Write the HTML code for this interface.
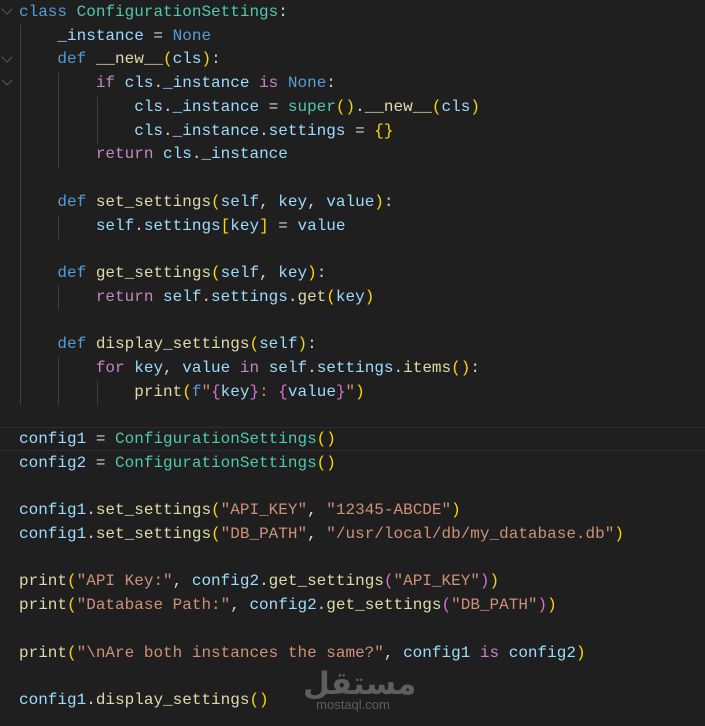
<!DOCTYPE html>
<html><head><meta charset="utf-8">
<style>
html,body{margin:0;padding:0;background:#1f1f1f;width:705px;height:726px;overflow:hidden}
#ed{position:relative;width:705px;height:726px;font-family:"Liberation Mono",monospace;font-size:16px;color:#d4d4d4}
.l{position:absolute;left:19px;height:23.72px;line-height:23.72px;white-space:pre}
.k{color:#569cd6}.c{color:#c586c0}.t{color:#4ec9b0}.f{color:#dcdcaa}.v{color:#9cdcfe}.s{color:#ce9178}
.b1{color:#ffd700}.b2{color:#da70d6}
.g{position:absolute;width:1px;background:#404040}
.cur{position:absolute;left:0;width:705px;top:427px;height:22px;border-top:1px solid #2d2d2d;border-bottom:1px solid #2d2d2d}
.fold{position:absolute;left:3px;width:7px;height:7px;border-right:1px solid #5a5a5a;border-bottom:1px solid #5a5a5a;transform:rotate(45deg)}
.logo{position:absolute;left:303px;top:670px;width:100px;text-align:center;color:#5e5e5e}
#lines{position:absolute;left:0;top:2px;width:705px;height:724px;font-family:"Liberation Mono",monospace;font-size:16px;color:#d4d4d4}
</style></head><body><div id="ed">
<div class="cur"></div>
<div class="fold" style="top:5px"></div>
<div class="fold" style="top:53px"></div>
<div class="fold" style="top:76px"></div>
<div class="g" style="left:20px;top:25px;height:380px"></div>
<div class="g" style="left:58px;top:73px;height:95px"></div>
<div class="g" style="left:97px;top:97px;height:47px"></div>
<div class="g" style="left:58px;top:215px;height:24px"></div>
<div class="g" style="left:58px;top:286px;height:24px"></div>
<div class="g" style="left:58px;top:357px;height:48px"></div>
<div class="g" style="left:97px;top:381px;height:24px"></div>
<div class="logo"><div style="font-family:'DejaVu Sans',sans-serif;font-size:31px;font-weight:bold;line-height:28px">مستقل</div><div style="font-family:'Liberation Sans',sans-serif;font-size:13px;line-height:13px">mostaql.com</div></div>
<div id="lines">
<div class="l" style="top:-1px"><span class="k">class</span> <span class="t">ConfigurationSettings</span>:</div>
<div class="l" style="top:22.7px">    <span class="v">_instance</span> = <span class="k">None</span></div>
<div class="l" style="top:46.4px">    <span class="k">def</span> <span class="f">__new__</span><span class="b1">(</span><span class="v">cls</span><span class="b1">)</span>:</div>
<div class="l" style="top:70.2px">        <span class="c">if</span> <span class="v">cls</span>.<span class="v">_instance</span> <span class="c">is</span> <span class="k">None</span>:</div>
<div class="l" style="top:93.9px">            <span class="v">cls</span>.<span class="v">_instance</span> = <span class="t">super</span><span class="b1">()</span>.<span class="f">__new__</span><span class="b1">(</span><span class="v">cls</span><span class="b1">)</span></div>
<div class="l" style="top:117.6px">            <span class="v">cls</span>.<span class="v">_instance</span>.<span class="v">settings</span> = <span class="b1">{}</span></div>
<div class="l" style="top:141.3px">        <span class="c">return</span> <span class="v">cls</span>.<span class="v">_instance</span></div>
<div class="l" style="top:188.8px">    <span class="k">def</span> <span class="f">set_settings</span><span class="b1">(</span><span class="v">self</span>, <span class="v">key</span>, <span class="v">value</span><span class="b1">)</span>:</div>
<div class="l" style="top:212.5px">        <span class="v">self</span>.<span class="v">settings</span><span class="b1">[</span><span class="v">key</span><span class="b1">]</span> = <span class="v">value</span></div>
<div class="l" style="top:259.9px">    <span class="k">def</span> <span class="f">get_settings</span><span class="b1">(</span><span class="v">self</span>, <span class="v">key</span><span class="b1">)</span>:</div>
<div class="l" style="top:283.7px">        <span class="c">return</span> <span class="v">self</span>.<span class="v">settings</span>.<span class="f">get</span><span class="b1">(</span><span class="v">key</span><span class="b1">)</span></div>
<div class="l" style="top:331.1px">    <span class="k">def</span> <span class="f">display_settings</span><span class="b1">(</span><span class="v">self</span><span class="b1">)</span>:</div>
<div class="l" style="top:354.8px">        <span class="c">for</span> <span class="v">key</span>, <span class="v">value</span> <span class="c">in</span> <span class="v">self</span>.<span class="v">settings</span>.<span class="f">items</span><span class="b1">()</span>:</div>
<div class="l" style="top:378.6px">            <span class="f">print</span><span class="b1">(</span><span class="k">f</span><span class="s">"</span><span class="b2">{</span><span class="v">key</span><span class="b2">}</span><span class="s">: </span><span class="b2">{</span><span class="v">value</span><span class="b2">}</span><span class="s">"</span><span class="b1">)</span></div>
<div class="l" style="top:426.0px"><span class="v">config1</span> = <span class="t">ConfigurationSettings</span><span class="b1">()</span></div>
<div class="l" style="top:449.7px"><span class="v">config2</span> = <span class="t">ConfigurationSettings</span><span class="b1">()</span></div>
<div class="l" style="top:497.2px"><span class="v">config1</span>.<span class="f">set_settings</span><span class="b1">(</span><span class="s">"API_KEY"</span>, <span class="s">"12345-ABCDE"</span><span class="b1">)</span></div>
<div class="l" style="top:520.9px"><span class="v">config1</span>.<span class="f">set_settings</span><span class="b1">(</span><span class="s">"DB_PATH"</span>, <span class="s">"/usr/local/db/my_database.db"</span><span class="b1">)</span></div>
<div class="l" style="top:568.3px"><span class="f">print</span><span class="b1">(</span><span class="s">"API Key:"</span>, <span class="v">config2</span>.<span class="f">get_settings</span><span class="b2">(</span><span class="s">"API_KEY"</span><span class="b2">)</span><span class="b1">)</span></div>
<div class="l" style="top:592.0px"><span class="f">print</span><span class="b1">(</span><span class="s">"Database Path:"</span>, <span class="v">config2</span>.<span class="f">get_settings</span><span class="b2">(</span><span class="s">"DB_PATH"</span><span class="b2">)</span><span class="b1">)</span></div>
<div class="l" style="top:639.5px"><span class="f">print</span><span class="b1">(</span><span class="s">"\nAre both instances the same?"</span>, <span class="v">config1</span> <span class="c">is</span> <span class="v">config2</span><span class="b1">)</span></div>
<div class="l" style="top:686.9px"><span class="v">config1</span>.<span class="f">display_settings</span><span class="b1">()</span></div>
</div>
</div>
</body></html>
